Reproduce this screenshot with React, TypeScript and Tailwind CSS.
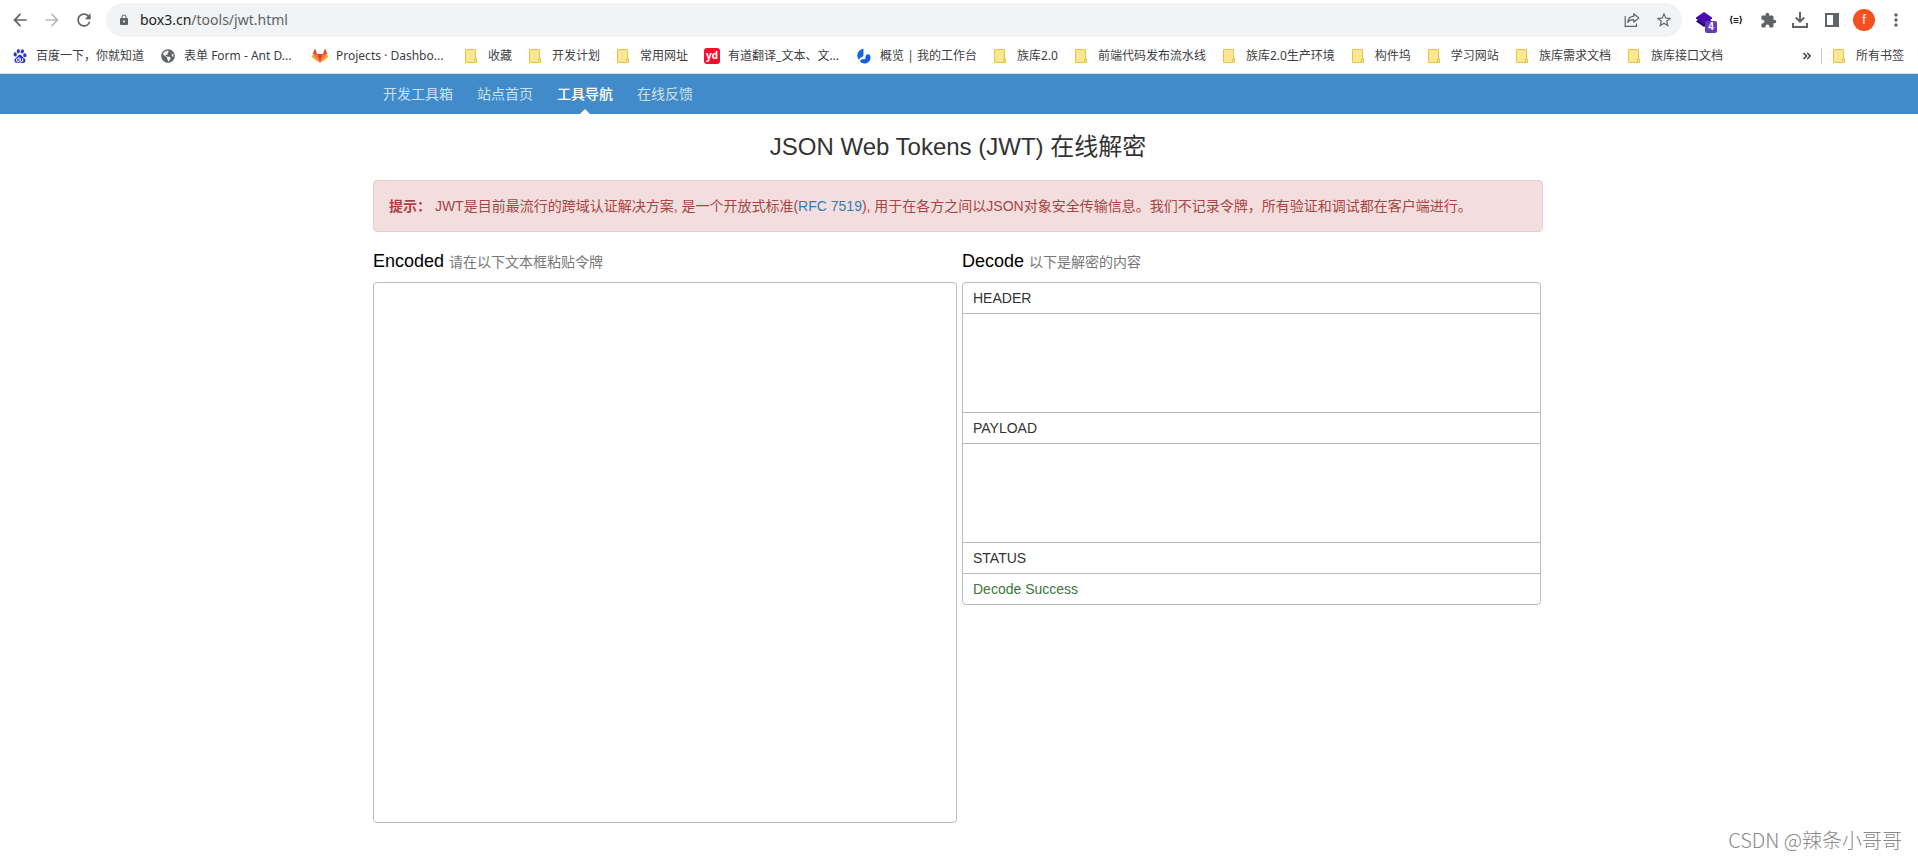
import { useState } from "react";
import type { ReactNode } from "react";
import {
  MdArrowBack,
  MdArrowForward,
  MdExtension,
  MdLock,
  MdMoreVert,
  MdRefresh,
  MdStarBorder,
} from "react-icons/md";
import { FaGlobeAmericas } from "react-icons/fa";
import { SiBaidu } from "react-icons/si";

function FolderIcon() {
  return (
    <svg viewBox="0 0 16 16" className="size-4 shrink-0" aria-hidden="true">
      <path d="M1.500 1.500h10v9h1v4h-11z" fill="#ffe694" stroke="#e8c54a" />
      <path d="M10.500 14.500v-3.500h2v3.500z" fill="#ffe694" stroke="#e8c54a" />
    </svg>
  );
}

function GitlabIcon() {
  return (
    <svg viewBox="0 0 16 16" className="size-4 shrink-0" aria-hidden="true">
      <path d="M8 15 5 6h6z" fill="#e24329" />
      <path d="M8 15 5 6H.9z" fill="#fc6d26" />
      <path d="M8 15 11 6h4.100z" fill="#fc6d26" />
      <path d="M.9 6 0 8.700c-.1.300 0 .6.2.7L8 15z" fill="#fca326" />
      <path d="M15.100 6l.9 2.700c.1.300 0 .6-.2.7L8 15z" fill="#fca326" />
      <path d="M.9 6H5L3.200 1c-.1-.300-.5-.300-.6 0z" fill="#e24329" />
      <path d="M15.100 6H11l1.800-5c.1-.300.5-.300.6 0z" fill="#e24329" />
    </svg>
  );
}

function YoudaoIcon() {
  return (
    <span className="flex size-4 shrink-0 items-center justify-center rounded-[3px] bg-[#fc0a2f] pb-0.5 font-['Open_Sans',sans-serif] text-[10px] leading-none font-bold text-white">
      yd
    </span>
  );
}

function WorkbenchIcon() {
  return (
    <svg viewBox="0 0 16 16" className="size-4 shrink-0" aria-hidden="true">
      <path
        d="M7.500.8v5.700C7.500 8 6.800 9 5.500 9.300 4 9.700 3.300 10.500 3.300 12 1.300 10.300.7 7.500 1.800 5 2.900 2.600 5 1.200 7.500.8z"
        fill="#1668dc"
      />
      <path
        d="M4.200 13.800c0-1.500 1-2.500 2.300-2.500H8c1.300 0 1.500-.8 1.500-2.300 0-1.500 1-2.700 2.400-2.700s2.600 1.200 2.600 3.200c0 3.500-2.700 6-5.800 6-1.700 0-3.300-.6-4.500-1.700z"
        fill="#0f5fe0"
      />
    </svg>
  );
}

type Bookmark = { label: string; icon?: ReactNode; long?: boolean };

const bookmarks: Bookmark[] = [
  { label: "百度一下，你就知道", icon: <SiBaidu className="size-4 shrink-0 p-px text-[#2932e1]" /> },
  {
    label: "表单 Form - Ant D...",
    icon: <FaGlobeAmericas className="size-4 shrink-0 p-px text-[#5f6368]" />,
    long: true,
  },
  { label: "Projects · Dashbo...", icon: <GitlabIcon />, long: true },
  { label: "收藏" },
  { label: "开发计划" },
  { label: "常用网址" },
  { label: "有道翻译_文本、文...", icon: <YoudaoIcon />, long: true },
  { label: "概览 | 我的工作台", icon: <WorkbenchIcon /> },
  { label: "族库2.0" },
  { label: "前端代码发布流水线" },
  { label: "族库2.0生产环境" },
  { label: "构件坞" },
  { label: "学习网站" },
  { label: "族库需求文档" },
  { label: "族库接口文档" },
];

function ToolButton({ label, children }: { label: string; children: ReactNode }) {
  return (
    <button type="button" aria-label={label} className="flex size-8 shrink-0 items-center justify-center text-[#5f6368]">
      {children}
    </button>
  );
}

function Toolbar() {
  return (
    <div className="flex h-10 items-center pr-1.5 pl-1">
      <ToolButton label="后退">
        <MdArrowBack className="size-5" />
      </ToolButton>
      <ToolButton label="前进">
        <MdArrowForward className="size-5 text-[#bababa]" />
      </ToolButton>
      <ToolButton label="重新加载">
        <MdRefresh className="size-5" />
      </ToolButton>
      <div className="mx-1.5 flex h-[34px] flex-1 items-center rounded-full bg-[#f1f3f4] pr-0.5 pl-3">
        <MdLock className="size-3 shrink-0 text-[#5f6368]" />
        <a href="#" className="ml-2.5 flex-1 text-[14px] leading-5 text-[#5f6368]">
          <span className="text-[#202124]">box3.cn</span>/tools/jwt.html
        </a>
        <ToolButton label="分享">
          <svg viewBox="0 0 16 16" className="size-4" fill="none" stroke="currentColor" strokeWidth="1.200">
            <path d="M1.200 4v10.400h11.300v-3" />
            <path d="M9.800 1.800 14.800 6l-5 4.200V7.700C7 7.700 5 8.500 3.800 10.500 4 7 6 4.600 9.800 4.200z" strokeLinejoin="round" />
          </svg>
        </ToolButton>
        <ToolButton label="收藏此页">
          <MdStarBorder className="size-[18px]" />
        </ToolButton>
      </div>
      <ToolButton label="扩展 4">
        <span className="relative size-[18px]">
          <svg viewBox="0 0 18 18" className="size-[18px]">
            <path d="M1 10.500 3.500 8.500 9 12l5.500-3.500 2.500 2L9 16z" fill="#1f0a6b" />
            <path d="M9 1 17 6.500v1.200L9 13 1 7.700V6.500z" fill="#4a0cb0" />
          </svg>
          <span className="absolute top-2.5 left-2.5 flex size-3 items-center justify-center rounded-xs bg-[#673ab7] font-['Liberation_Sans',sans-serif] text-[10px] leading-none font-bold text-white">
            4
          </span>
        </span>
      </ToolButton>
      <ToolButton label="JSON">
        <svg viewBox="0 0 14 12" className="h-3 w-3.5" fill="none" stroke="#222" strokeWidth="1.300">
          <path d="M3.500 2.500H3c-.8 0-.8.8-.8 1.700S2.200 6 1 6c1.200 0 1.200.9 1.200 1.800s0 1.700.8 1.700h.5M10.500 2.500h.5c.8 0 .8.8.8 1.700S11.800 6 13 6c-1.200 0-1.200.9-1.200 1.800s0 1.700-.8 1.700h-.5" />
          <path d="M4.500 4.500h5M4.500 6.500h5M4.500 8.500h5" strokeWidth="1" />
        </svg>
      </ToolButton>
      <ToolButton label="扩展程序">
        <MdExtension className="size-[17px]" />
      </ToolButton>
      <ToolButton label="下载">
        <svg viewBox="0 0 16 16" className="size-4" fill="none" stroke="currentColor" strokeWidth="2">
          <path d="M8 0v9.500M3.800 5.500 8 9.700l4.200-4.200M1 11v4h14v-4" />
        </svg>
      </ToolButton>
      <ToolButton label="侧边栏">
        <svg viewBox="0 0 14 14" className="size-3.5">
          <path d="M0 0h14v14H0zM2 2v10h6V2z" fill="currentColor" fillRule="evenodd" />
        </svg>
      </ToolButton>
      <ToolButton label="个人资料">
        <span className="flex size-[22px] items-center justify-center rounded-full bg-[#f4511e] font-['Roboto',sans-serif] text-[12px] leading-none text-white">
          f
        </span>
      </ToolButton>
      <ToolButton label="更多">
        <MdMoreVert className="size-5" />
      </ToolButton>
    </div>
  );
}

function BookmarkBar() {
  return (
    <div className="flex h-[34px] items-center border-b border-[#dadce0] pr-3.5 pb-0.5 pl-3 text-[12px] leading-4 text-[#3c4043]">
      <ul className="flex min-w-0 flex-1 items-center gap-4 overflow-hidden">
        {bookmarks.map(({ label, icon, long }) => (
          <li key={label} className="shrink-0">
            <a href="#" className="flex items-center gap-2 whitespace-nowrap">
              {icon ?? <FolderIcon />}
              <span className={long ? "w-28" : undefined}>{label}</span>
            </a>
          </li>
        ))}
      </ul>
      <button type="button" aria-label="更多书签" className="mr-2.5 text-[#3c4043]">
        <svg viewBox="0 0 8 8" className="size-2" fill="none" stroke="currentColor" strokeWidth="1.500">
          <path d="M.5 1l3 3-3 3M4.200 1l3 3-3 3" />
        </svg>
      </button>
      <span className="mr-2.5 h-4 w-px bg-[#c8cacc]" />
      <a href="#" className="flex items-center gap-2 whitespace-nowrap">
        <FolderIcon />
        所有书签
      </a>
    </div>
  );
}

const navItems = ["开发工具箱", "站点首页", "工具导航", "在线反馈"];

function SiteNav() {
  return (
    <nav className="bg-[#428bca] pr-0.5">
      <ul className="mx-auto flex h-10 max-w-[1170px] text-[14px] leading-5 text-[#cde0f2]">
        {navItems.map((item) => {
          const active = item === "工具导航";
          return (
            <li key={item} className="relative flex items-center px-3 first:pl-2.5">
              <a href="#" aria-current={active ? "page" : undefined} className={active ? "font-medium text-white" : undefined}>
                {item}
              </a>
              {active && (
                <span className="absolute bottom-0 left-1/2 -translate-x-1/2 border-x-[5px] border-b-[5px] border-x-transparent border-b-white" />
              )}
            </li>
          );
        })}
      </ul>
    </nav>
  );
}

function PanelHeading({ children }: { children: ReactNode }) {
  return <h3 className="border-b border-[#bbb] px-2.5 py-[5px] leading-5">{children}</h3>;
}

function PanelBody() {
  return <pre className="h-[99px] border-b border-[#bbb] px-2.5 py-1" />;
}

export default function App() {
  const [token, setToken] = useState("");

  return (
    <div className="relative min-h-screen bg-white font-['Liberation_Sans','Noto_Sans_CJK_SC',sans-serif] text-[14px] text-[#333]">
      <header className="font-['Noto_Sans','Noto_Sans_CJK_SC',sans-serif]">
        <Toolbar />
        <BookmarkBar />
      </header>
      <SiteNav />

      <main className="pr-0.5">
        <div className="mx-auto max-w-[1170px]">
          <h1 className="py-4 text-center text-[24px] leading-[34px]">JSON Web Tokens (JWT) 在线解密</h1>

          <div role="alert" className="rounded-sm border border-[#ebccd1] bg-[#f2dede] p-[15px] leading-5 text-[#a94442]">
            <strong>提示：</strong> JWT是目前最流行的跨域认证解决方案, 是一个开放式标准(
            <a href="#" className="text-[#337ab7]">
              RFC 7519
            </a>
            ), 用于在各方之间以JSON对象安全传输信息。我们不记录令牌，所有验证和调试都在客户端进行。
          </div>

          <div className="flex items-start gap-[5px] pr-0.5">
            <section className="w-1/2">
              <label htmlFor="token" className="block pt-4 pb-2 text-[18px] leading-[26px] text-black">
                Encoded <small className="text-[14px] leading-5 text-[#777]">请在以下文本框粘贴令牌</small>
              </label>
              <textarea
                id="token"
                value={token}
                onChange={(e) => setToken(e.target.value)}
                className="block h-[541px] w-full resize-none rounded-sm border border-[#bbb] p-2.5 outline-none"
              />
            </section>

            <section className="flex-1">
              <h2 className="pt-4 pb-2 text-[18px] leading-[26px] text-black">
                Decode <small className="text-[14px] leading-5 text-[#777]">以下是解密的内容</small>
              </h2>
              <div className="rounded-sm border border-[#bbb]">
                <PanelHeading>HEADER</PanelHeading>
                <PanelBody />
                <PanelHeading>PAYLOAD</PanelHeading>
                <PanelBody />
                <PanelHeading>STATUS</PanelHeading>
                <p className="px-2.5 py-[5px] leading-5 text-[#3c763d]">Decode Success</p>
              </div>
            </section>
          </div>
        </div>
      </main>

      <p className="absolute right-4 bottom-1.5 font-['Noto_Sans_CJK_SC',sans-serif] text-[20px] leading-7 font-light text-[#8a8a8a]">
        CSDN @辣条小哥哥
      </p>
    </div>
  );
}
